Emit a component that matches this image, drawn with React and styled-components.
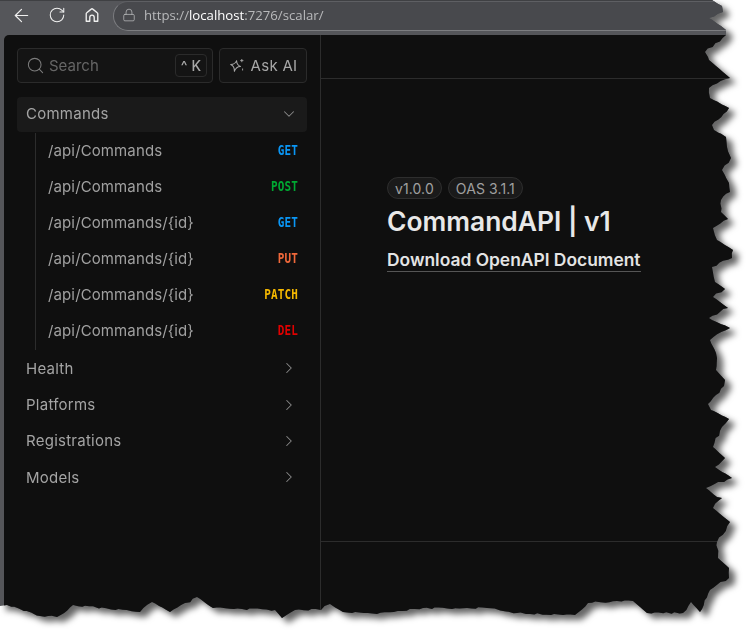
import React from 'react'
import styled, { createGlobalStyle } from 'styled-components'
import { ChevronDown, ChevronRight, Search, RotateCw, ArrowLeft, Lock } from 'lucide-react'

const GlobalStyle = createGlobalStyle`
    html, body { margin: 0; padding: 0; background: #fff; }
    body { font-family: Inter, "Liberation Sans", sans-serif; overflow: hidden; }
`

// torn paper edge traced from the screenshot, clockwise from the top left
const tornPoints = [
    [712, 0], [722, 6], [723, 12], [709, 18], [721, 26], [726, 30], [726, 35], [705, 52], [709, 60],
    [730, 78], [709, 88], [710, 98], [729, 108], [712, 125], [714, 130], [726, 137], [727, 147], [731, 158],
    [722, 170], [729, 183], [730, 192], [721, 200], [721, 212], [728, 219], [713, 228], [717, 240], [733, 250],
    [732, 258], [712, 267], [715, 282], [725, 289], [713, 297], [728, 308], [709, 318], [712, 320], [730, 328],
    [710, 340], [716, 353], [717, 358], [716, 370], [725, 380], [724, 386], [708, 404], [711, 410], [729, 419],
    [722, 427], [713, 447], [725, 458], [715, 467], [732, 478], [706, 488], [717, 497], [722, 498], [713, 508],
    [730, 522], [717, 542], [718, 558], [729, 568], [729, 578], [710, 590], [700, 612], [691, 602], [683, 613],
    [647, 613], [633, 601], [617, 601], [588, 603], [575, 615], [517, 613], [487, 608], [423, 608], [377, 614],
    [343, 612], [330, 604], [321, 610], [295, 610], [282, 618], [275, 610], [213, 608], [197, 597], [170, 612],
    [152, 602], [140, 612], [73, 605], [57, 617], [40, 616], [7, 605], [0, 606],
]

// break the long straight runs up so the edge looks rough
const roughen = points => {
    const out = []
    points.forEach(([x, y], i) => {
        out.push([x, y])
        const next = points[i + 1]
        if (!next) return
        const steps = Math.floor(Math.hypot(next[0] - x, next[1] - y) / 4)
        for (let s = 1; s < steps; s++) {
            const t = s / steps
            const n = Math.sin((x + s) * 12.9898 + (y + s) * 78.233) * 43758.5453
            const wobble = (n - Math.floor(n) - 0.5) * 2
            out.push([(x + (next[0] - x) * t + wobble).toFixed(1), (y + (next[1] - y) * t + wobble).toFixed(1)])
        }
    })
    return out
}

const tornEdge = [[0, 0], ...roughen(tornPoints)].map(([x, y]) => `${x}px ${y}px`).join(', ')

const Shadow = styled.div`
    width: 754px;
    height: 644px;
    filter: drop-shadow(6px 5px 3px rgba(0, 0, 0, 0.6));
`

const Window = styled.div`
    width: 100%;
    height: 100%;
    display: flex;
    flex-direction: column;
    background: #55565a;
    clip-path: polygon(${tornEdge});
`

const Toolbar = styled.div`
    height: 35px;
    flex-shrink: 0;
    display: flex;
    align-items: flex-start;
    padding-left: 11px;
    box-sizing: border-box;
    border-top: 1px solid #3f4043;
    color: #f0f0f0;
`

const NavButton = styled.div`
    width: ${p => p.$width}px;
    height: 28px;
    display: flex;
    align-items: center;
`

const AddressBar = styled.div`
    flex: 1;
    height: 30px;
    box-sizing: border-box;
    display: flex;
    align-items: center;
    gap: 8px;
    padding: 0 0 2px 8px;
    margin-left: -1px;
    background: #48494d;
    border: 1px solid #7c7d80;
    border-top-color: #5e5f63;
    border-right: none;
    border-radius: 15px 0 0 15px;
    color: #b9babc;
`

const Url = styled.span`
    font-family: "Open Sans", "Noto Sans", sans-serif;
    font-size: 13.2px;
    color: #b8b9bb;

    b {
        font-weight: 400;
        color: #fff;
    }
`

const Body = styled.div`
    flex: 1;
    display: flex;
    padding-left: 4px;
    min-height: 0;
`

const Sidebar = styled.aside`
    width: 317px;
    flex-shrink: 0;
    box-sizing: border-box;
    padding: 13px 13px 0;
    background: #0f0f0f;
    border-right: 1px solid #2c2c2c;
    border-top-left-radius: 5px;
`

const SearchRow = styled.div`
    display: flex;
    gap: 6px;
    margin-bottom: 14px;
`

const SearchBox = styled.div`
    width: 196px;
    height: 35px;
    box-sizing: border-box;
    display: flex;
    align-items: center;
    gap: 4px;
    padding: 0 5px 0 8px;
    background: #141414;
    border: 1px solid #2b2b2b;
    border-radius: 4px;
    color: #7c7c7c;
    font-size: 15px;
`

const Placeholder = styled.span`
    flex: 1;
    color: #666;
`

const Kbd = styled.kbd`
    width: 32px;
    height: 23px;
    box-sizing: border-box;
    display: flex;
    align-items: center;
    justify-content: center;
    gap: 4px;
    border: 1px solid #2b2b2b;
    border-radius: 4px;
    font-family: Inter, sans-serif;
    font-size: 14px;
    font-weight: 500;
    color: #a8a8a8;
`

const AskButton = styled.div`
    width: 88px;
    height: 35px;
    box-sizing: border-box;
    display: flex;
    align-items: center;
    justify-content: center;
    gap: 6px;
    background: #141414;
    border: 1px solid #2b2b2b;
    border-radius: 4px;
    color: #a8a8a8;
    font-size: 15px;
    letter-spacing: 0.3px;
`

const GroupRow = styled.div`
    height: ${p => (p.$open ? 35 : 36.3)}px;
    box-sizing: border-box;
    display: flex;
    align-items: center;
    justify-content: space-between;
    padding: 0 9px ${p => (p.$open ? 2 : 1)}px 9px;
    border-radius: 4px;
    background: ${p => (p.$open ? '#1a1a1a' : 'transparent')};
    color: #a4a4a4;
    font-size: 15px;
    letter-spacing: 0.25px;

    svg { color: #8a8a8a; }
`

const Endpoints = styled.div`
    margin: 1px 0 1px 18px;
    padding-left: 12px;
    border-left: 1px solid #2c2c2c;
`

const EndpointRow = styled.div`
    height: 36.1px;
    box-sizing: border-box;
    display: flex;
    align-items: center;
    justify-content: space-between;
    padding: 0 9px 2px 0;
    color: #a0a0a0;
    font-size: 15px;
    letter-spacing: 0.12px;
`

const Method = styled.span`
    display: inline-block;
    font-family: "DejaVu Sans Mono", "Liberation Mono", monospace;
    font-size: 11px;
    font-weight: 700;
    transform: scaleY(1.2);
    color: ${p => p.$color};
`

const Main = styled.main`
    flex: 1;
    display: flex;
    flex-direction: column;
    background: #0f0f0f;
`

const TopBar = styled.div`
    height: 44px;
    flex-shrink: 0;
    box-sizing: border-box;
    border-bottom: 1px solid #2c2c2c;
`

const Intro = styled.section`
    height: 463px;
    flex-shrink: 0;
    box-sizing: border-box;
    padding: 98px 0 0 66px;
    border-bottom: 1px solid #2c2c2c;
`

const Badges = styled.div`
    display: flex;
    gap: 6px;
    margin-bottom: 6px;
`

const Badge = styled.span`
    height: 22px;
    box-sizing: border-box;
    display: flex;
    align-items: center;
    padding: 0 7px;
    background: #1a1a1a;
    border: 1px solid #2e2e2e;
    border-radius: 11px;
    color: #a0a0a0;
    font-size: 14px;
    letter-spacing: 0.1px;
`

const Title = styled.h1`
    margin: 0;
    font-size: 26.4px;
    line-height: 32px;
    font-weight: 600;
    color: #e8e8e8;
`

const DownloadLink = styled.a`
    display: inline-block;
    margin-top: 12px;
    font-size: 17.4px;
    line-height: 22px;
    font-weight: 600;
    color: #e4e4e4;
    border-bottom: 1px solid #555;
`

const HomeIcon = () => (
    <svg width="16" height="16" viewBox="0 0 18 18" fill="none" stroke="currentColor" strokeWidth="1.5" strokeLinejoin="round">
        <path d="M2.5 16V7.6c0-.5.2-.9.6-1.2l5-4a1.4 1.4 0 0 1 1.8 0l5 4c.4.3.6.7.6 1.2V16h-4v-4.3a2.500 2.500 0 0 0-5 0V16z" />
    </svg>
)

const SparkIcon = () => (
    <svg width="16" height="16" viewBox="0 0 16 16" fill="none" stroke="currentColor" strokeWidth="1" strokeLinejoin="round">
        <path d="M6.500 2.500c.6 3 1.900 4.400 5 5-3.100.6-4.400 2-5 6-.6-4-1.900-5.400-5-6 3.100-.6 4.400-2 5-5z" transform="rotate(12 6.500 8)" />
        <path d="M12.800 1v3.200M11.200 2.600h3.200M13.600 10.500v2" strokeWidth="0.9" />
    </svg>
)

const methodColors = {
    GET: '#0a96f5',
    POST: '#00a832',
    PUT: '#f0683a',
    PATCH: '#f5b800',
    DEL: '#e00000',
}

const endpoints = [
    { path: '/api/Commands', method: 'GET' },
    { path: '/api/Commands', method: 'POST' },
    { path: '/api/Commands/{id}', method: 'GET' },
    { path: '/api/Commands/{id}', method: 'PUT' },
    { path: '/api/Commands/{id}', method: 'PATCH' },
    { path: '/api/Commands/{id}', method: 'DEL' },
]

const groups = ['Health', 'Platforms', 'Registrations', 'Models']

const App = () => {
    return (
        <>
            <GlobalStyle />
            <Shadow>
                <Window>
                    <Toolbar>
                        <NavButton $width={37}><ArrowLeft size={21} strokeWidth={1.4} /></NavButton>
                        <NavButton $width={36}><RotateCw size={18} strokeWidth={1.4} /></NavButton>
                        <NavButton $width={30}><HomeIcon /></NavButton>
                        <AddressBar>
                            <Lock size={14} strokeWidth={1.3} />
                            <Url>https://<b>localhost</b>:7276/scalar/</Url>
                        </AddressBar>
                    </Toolbar>
                    <Body>
                        <Sidebar>
                            <SearchRow>
                                <SearchBox>
                                    <Search size={19} strokeWidth={1.3} />
                                    <Placeholder>Search</Placeholder>
                                    <Kbd><span>^</span><span>K</span></Kbd>
                                </SearchBox>
                                <AskButton><SparkIcon />Ask AI</AskButton>
                            </SearchRow>
                            <GroupRow $open>
                                Commands
                                <ChevronDown size={18} strokeWidth={1.4} />
                            </GroupRow>
                            <Endpoints>
                                {endpoints.map((item, i) => (
                                    <EndpointRow key={i}>
                                        {item.path}
                                        <Method $color={methodColors[item.method]}>{item.method}</Method>
                                    </EndpointRow>
                                ))}
                            </Endpoints>
                            {groups.map(name => (
                                <GroupRow key={name}>
                                    {name}
                                    <ChevronRight size={18} strokeWidth={1.4} />
                                </GroupRow>
                            ))}
                        </Sidebar>
                        <Main>
                            <TopBar />
                            <Intro>
                                <Badges>
                                    <Badge>v1.0.0</Badge>
                                    <Badge>OAS 3.1.1</Badge>
                                </Badges>
                                <Title>CommandAPI | v1</Title>
                                <DownloadLink>Download OpenAPI Document</DownloadLink>
                            </Intro>
                        </Main>
                    </Body>
                </Window>
            </Shadow>
        </>
    )
}

export default App
